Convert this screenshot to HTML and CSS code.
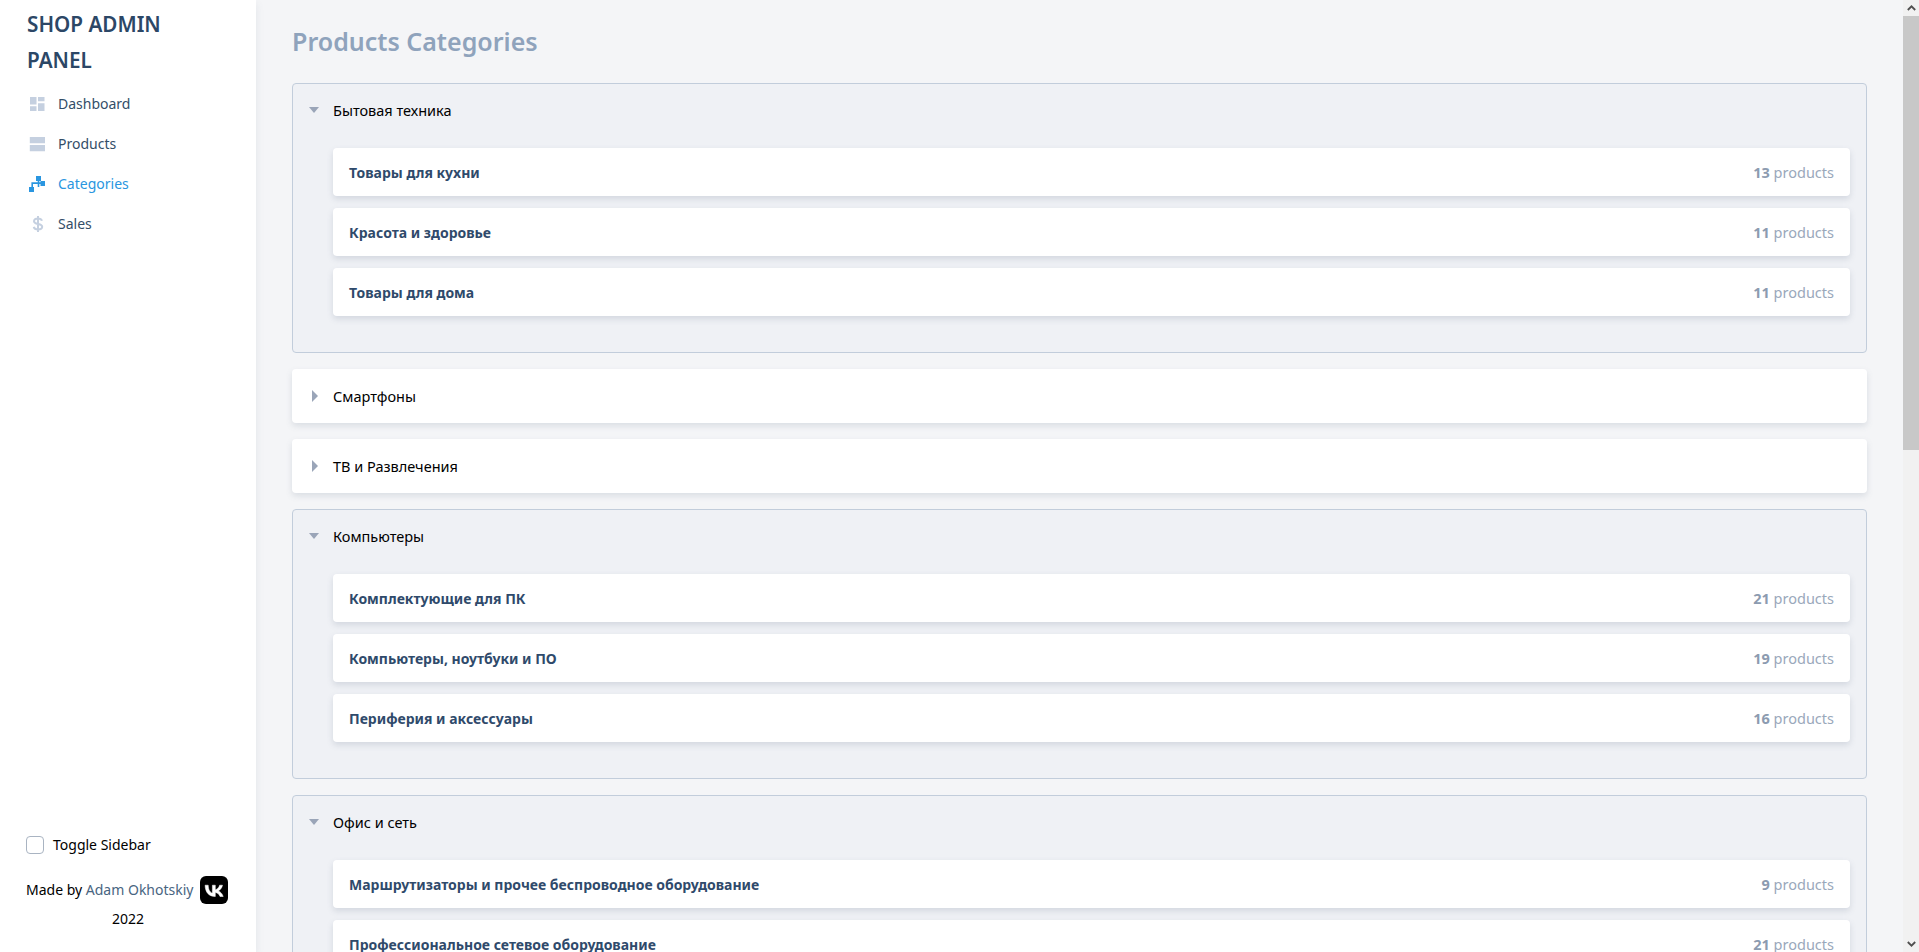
FILE: index.html
```html
<!DOCTYPE html>
<html lang="en">
<head>
<meta charset="utf-8">
<title>Shop Admin Panel</title>
<link rel="stylesheet" href="styles.css">
</head>
<body>
<aside class="sidebar">
  <div class="brand">SHOP ADMIN PANEL</div>
  <nav class="nav">
    <a class="nav-item">
      <svg class="nav-icon" viewBox="0 0 16 16"><path fill="#c5d0e0" d="M1 1h6.500v7.500H1zM9 1h6.500v4.200H9zM9 7.300h6.500v7.700H9zM1 10.300h6.500V15H1z"/></svg>
      <span>Dashboard</span>
    </a>
    <a class="nav-item">
      <svg class="nav-icon" viewBox="0 0 16 16"><path fill="#c5d0e0" d="M.8 1h15.200v6.300H.8zM.8 9h15.200v6.300H.8z"/></svg>
      <span>Products</span>
    </a>
    <a class="nav-item active">
      <svg class="nav-icon" viewBox="0 0 16 16"><path fill="#2a96e0" d="M7 0h5v5H7zM11.500 5h5v5h-5zM0 11h5v5H0zM8.700 5h1.600v1.300H12v1.600h-1.700V11H8.700V7.900H4v3.100H2.400V6.300h6.300z"/></svg>
      <span>Categories</span>
    </a>
    <a class="nav-item">
      <svg class="nav-icon" viewBox="0 0 16 16"><path fill="none" stroke="#c5d0e0" stroke-width="2" d="M13 4.800C12.500 3.300 11 2.500 9 2.500c-2.500 0-4 1.100-4 2.800 0 3.900 8.200 1.700 8.200 5.500 0 1.700-1.700 2.700-4.200 2.700-2.300 0-3.800-.9-4.300-2.600M9 0v16"/></svg>
      <span>Sales</span>
    </a>
  </nav>
  <div class="sidebar-foot">
    <label class="toggle"><input class="toggle-box" type="checkbox"><span>Toggle Sidebar</span></label>
    <div class="credit">
      <span>Made by <a class="author">Adam Okhotskiy</a></span>
      <svg class="vk" viewBox="0 0 28 28"><rect width="28" height="28" rx="6" fill="#000"/><path fill="#fff" stroke="#fff" stroke-width=".5" d="M15 20.500C8.800 20.500 5.300 16.300 5.100 9.200h3.100c.1 5.200 2.400 7.400 4.200 7.900V9.200h2.900v4.500c1.800-.2 3.700-2.200 4.300-4.500h2.900c-.5 2.800-2.500 4.800-4 5.700 1.500.7 3.800 2.500 4.700 5.600h-3.200c-.7-2.100-2.400-3.800-4.700-4v4z"/></svg>
    </div>
    <div class="year">2022</div>
  </div>
</aside>

<main class="main">
  <h1 class="title">Products Categories</h1>

  <section class="cat open">
    <div class="cat-head"><span class="caret"></span><span>Бытовая техника</span></div>
    <div class="cat-body">
      <div class="row"><span class="row-name">Товары для кухни</span><span class="row-count"><b>13</b> products</span></div>
      <div class="row"><span class="row-name">Красота и здоровье</span><span class="row-count"><b>11</b> products</span></div>
      <div class="row"><span class="row-name">Товары для дома</span><span class="row-count"><b>11</b> products</span></div>
    </div>
  </section>

  <section class="cat closed">
    <div class="cat-head"><span class="caret"></span><span>Смартфоны</span></div>
  </section>

  <section class="cat closed">
    <div class="cat-head"><span class="caret"></span><span>ТВ и Развлечения</span></div>
  </section>

  <section class="cat open">
    <div class="cat-head"><span class="caret"></span><span>Компьютеры</span></div>
    <div class="cat-body">
      <div class="row"><span class="row-name">Комплектующие для ПК</span><span class="row-count"><b>21</b> products</span></div>
      <div class="row"><span class="row-name">Компьютеры, ноутбуки и ПО</span><span class="row-count"><b>19</b> products</span></div>
      <div class="row"><span class="row-name">Периферия и аксессуары</span><span class="row-count"><b>16</b> products</span></div>
    </div>
  </section>

  <section class="cat open">
    <div class="cat-head"><span class="caret"></span><span>Офис и сеть</span></div>
    <div class="cat-body">
      <div class="row"><span class="row-name">Маршрутизаторы и прочее беспроводное оборудование</span><span class="row-count"><b>9</b> products</span></div>
      <div class="row"><span class="row-name">Профессиональное сетевое оборудование</span><span class="row-count"><b>21</b> products</span></div>
    </div>
  </section>
</main>

<div class="scrollbar">
  <div class="sb-btn">
    <svg class="sb-arrow" viewBox="0 0 9 6"><path d="M.8 5 4.500 1.300 8.200 5" fill="none" stroke="#505050" stroke-width="1.800"/></svg>
  </div>
  <div class="sb-track"><div class="sb-thumb"></div></div>
  <div class="sb-btn">
    <svg class="sb-arrow" viewBox="0 0 9 6"><path d="M.8 1 4.500 4.700 8.200 1" fill="none" stroke="#505050" stroke-width="1.800"/></svg>
  </div>
</div>
</body>
</html>
```
FILE: styles.css
```css
* { box-sizing: border-box; }
html, body { height: 100%; }
body {
  margin: 0;
  display: flex;
  overflow: hidden;
  background: #f4f5f7;
  font-family: "Noto Sans", "Liberation Sans", sans-serif;
  font-size: 14px;
  line-height: 24px;
  color: #000;
}
.sidebar {
  flex: 0 0 256px;
  height: 100%;
  display: flex;
  flex-direction: column;
  padding: 6px 26px 0 27px;
  background: #fff;
  box-shadow: 0 4px 8px rgba(100, 116, 139, .12);
  z-index: 1;
}
.brand {
  font-size: 20.700px;
  font-weight: 600;
  line-height: 36px;
  color: #2c4766;
  width: 160px;
}
.nav { display: flex; flex-direction: column; margin-top: 6px; }
.nav-item {
  display: flex;
  align-items: center;
  gap: 13px;
  height: 40px;
  padding-left: 2px;
  color: #334e68;
}
.nav-icon { width: 16px; height: 16px; flex: none; }
.nav-item.active { color: #2a96e0; }
.sidebar-foot { margin-top: auto; margin-left: -1px; padding-bottom: 21px; }
.toggle { display: flex; align-items: center; gap: 9px; }
.toggle-box {
  appearance: none;
  width: 18px;
  height: 18px;
  margin: 0;
  background: #fff;
  border: 1px solid #a9b4c2;
  border-radius: 4px;
}
.credit { display: flex; align-items: center; gap: 7px; margin-top: 19px; white-space: nowrap; }
.author { color: #486581; }
.vk { width: 28px; height: 28px; flex: none; }
.year { text-align: center; width: 204px; margin-top: 3px; }

.main { flex: 1; min-width: 0; height: 100%; overflow: hidden; padding: 22px 36px 0; }
.title {
  margin: 0 0 22px;
  font-size: 25px;
  line-height: 39px;
  font-weight: 600;
  color: #8fa3bc;
}
.cat { margin-bottom: 16px; border-radius: 4px; }
.cat.open { background: #eff1f5; border: 1px solid #c2cddb; padding: 0 16px 36px; }
.cat.closed { background: #fff; padding: 0 16px; box-shadow: 0 3px 6px rgba(100, 116, 139, .18); }
.cat-head { display: flex; align-items: center; height: 54px; gap: 12px; font-size: 14.500px; }
.open .cat-head { height: 52px; }
.caret { display: block; width: 0; height: 0; flex: none; }
.open .caret { margin-right: 2px; border-left: 5.500px solid transparent; border-right: 5.500px solid transparent; border-top: 6px solid #9aa5b8; }
.closed .caret { margin-left: 4px; margin-right: 3px; border-top: 6px solid transparent; border-bottom: 6px solid transparent; border-left: 6px solid #9aa5b8; }
.cat-body { display: flex; flex-direction: column; gap: 12px; padding-left: 24px; margin-top: 12px; }
.row {
  display: flex;
  align-items: center;
  justify-content: space-between;
  height: 48px;
  padding: 1px 16px 0;
  background: #fff;
  border-radius: 4px;
  box-shadow: 0 3px 6px rgba(100, 116, 139, .2);
}
.row-name { font-weight: 700; color: #2f4a6b; }
.row-count { font-size: 14.500px; color: #9aa8bb; margin-top: -1px; }
.row-count b { font-weight: 700; color: #8c9bb0; }

.scrollbar { flex: 0 0 16px; height: 100%; display: flex; flex-direction: column; background: #f1f1f1; z-index: 2; }
.sb-btn { flex: 0 0 16px; display: flex; align-items: center; justify-content: center; }
.sb-arrow { width: 9px; height: 6px; }
.sb-track { flex: 1; }
.sb-thumb { height: 434px; background: #c8c8c8; }
```
